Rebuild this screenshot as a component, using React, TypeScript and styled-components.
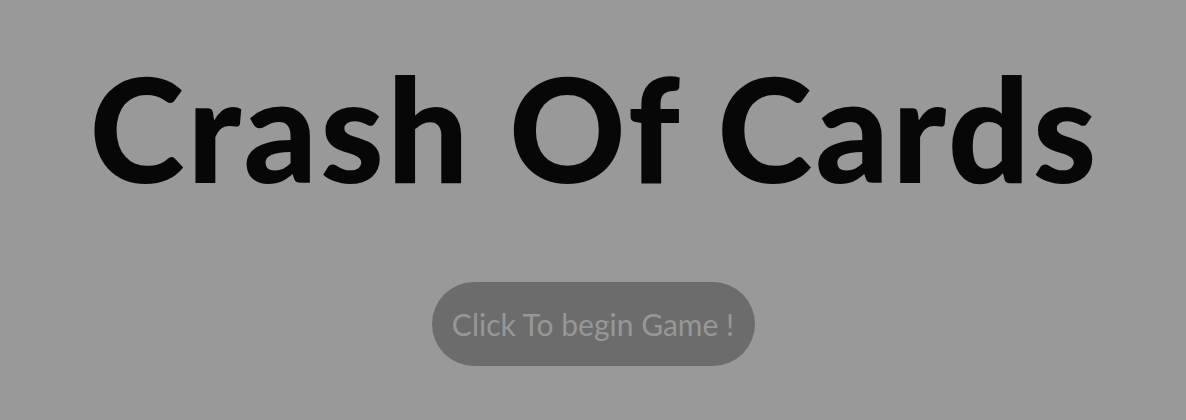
import React from "react";
import styled, { createGlobalStyle } from "styled-components";

const Global = createGlobalStyle`
  html, body { margin: 0; padding: 0; background: #999999; }
  body { font-family: "Lato", "Liberation Sans", sans-serif; }
`;

const Page = styled.main`
  width: 1186px;
  height: 420px;
  background: #999999;
  display: flex;
  flex-direction: column;
  align-items: center;
  overflow: hidden;
`;

const Title = styled.h1`
  margin: 56px 0 0;
  padding-left: 3px;
  font-family: "Lato", "Liberation Sans", sans-serif;
  font-weight: 900;
  font-size: 144px;
  line-height: 1;
  letter-spacing: 3px;
  color: #070707;
  white-space: nowrap;
`;

const StartButton = styled.button`
  margin-top: 82px;
  width: 323px;
  height: 84px;
  border: none;
  border-radius: 42px;
  background: #6c6c6c;
  color: #979797;
  font-family: "Lato", "Liberation Sans", sans-serif;
  font-size: 30px;
  font-weight: 400;
  cursor: pointer;
  display: flex;
  align-items: center;
  justify-content: center;
  padding: 0;
`;

export default function App() {
  return (
    <>
      <Global />
      <Page>
        <Title>Crash Of Cards</Title>
        <StartButton>Click To begin Game !</StartButton>
      </Page>
    </>
  );
}
